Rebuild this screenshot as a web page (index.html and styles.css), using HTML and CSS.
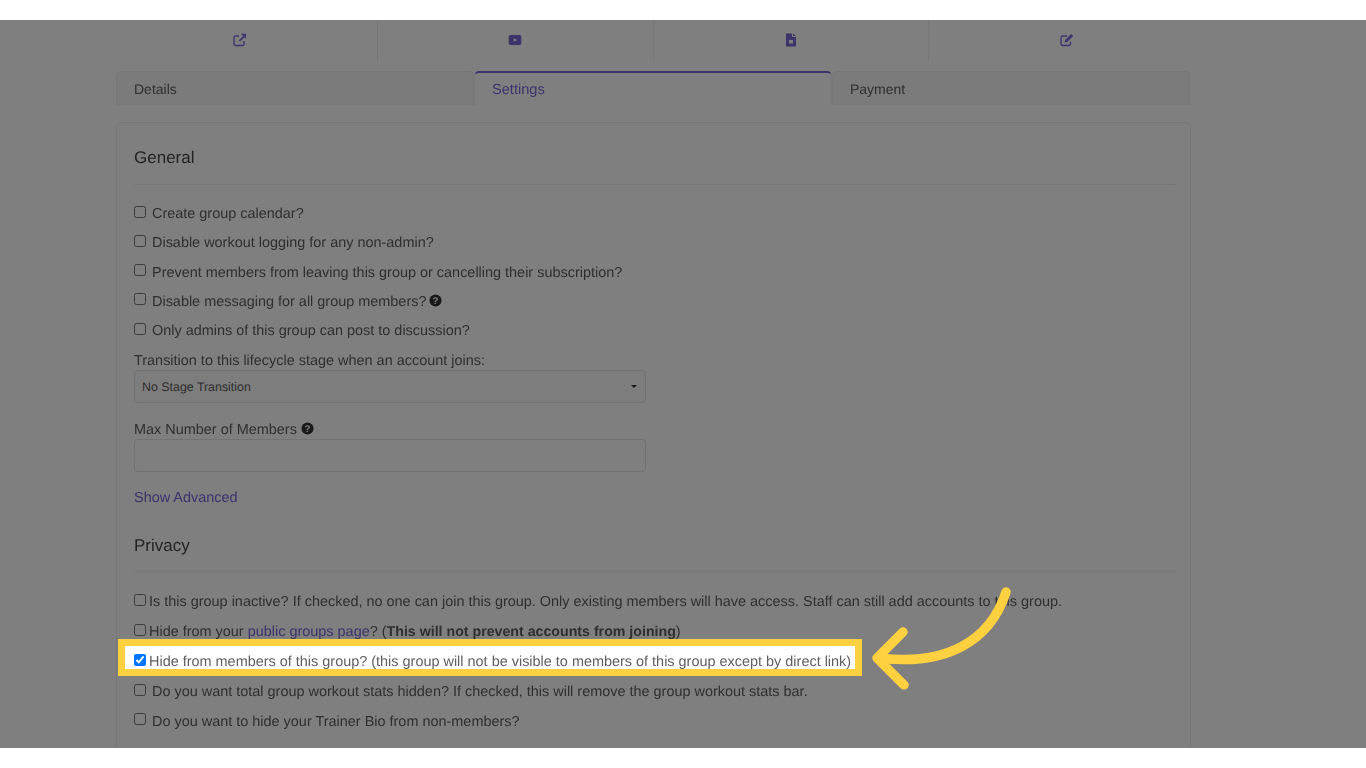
FILE: index.html
```html
<!DOCTYPE html>
<html>
	<head>
		<meta charset="UTF-8"/>
		<title>Group settings</title>
		<link rel="stylesheet" href="styles.css">
	</head>
	<body>
		<div class="frame">
			<div class="shot">
				<div class="page">
					<div class="toolbar">
						<div class="tool">
							<svg viewBox="-1 0 14 14" class="ico"><path d="M11 8v3a1.500 1.500 0 0 1-1.500 1.500h-7A1.500 1.500 0 0 1 1 11V4.500A1.500 1.500 0 0 1 2.500 3H6" fill="none" stroke="currentColor" stroke-width="1.300"/><path d="M8 .8h5.200V6l-1.800-1.800-4.300 4.400-1.300-1.300 4.300-4.400z" fill="currentColor"/></svg>
						</div>
						<div class="tool">
							<svg viewBox="0 0 14 14" class="ico"><path fill-rule="evenodd" d="M2.500 2h9a1.800 1.800 0 0 1 1.800 1.800v6.400a1.800 1.800 0 0 1-1.800 1.800h-9a1.800 1.800 0 0 1-1.800-1.800V3.800A1.800 1.800 0 0 1 2.500 2zM5.800 5.200v3.600L9 7z" fill="currentColor"/></svg>
						</div>
						<div class="tool">
							<svg viewBox="0 0 14 14" class="ico"><path fill-rule="evenodd" d="M2 .5h6v3.500h4v9.500H2zM9 .5l3 2.600H9zM5 7v3.500h4V7z" fill="currentColor"/></svg>
						</div>
						<div class="tool">
							<svg viewBox="0 0 14 14" class="ico"><path d="M10.500 8.500V11A1.500 1.500 0 0 1 9 12.500H2.500A1.500 1.500 0 0 1 1 11V4.500A1.500 1.500 0 0 1 2.500 3H7" fill="none" stroke="currentColor" stroke-width="1.300"/><path d="M11.200 1l1.900 1.900-6 6-2.500.6.600-2.500z" fill="currentColor"/></svg>
						</div>
					</div>

					<div class="tabs">
						<div class="tab">Details</div>
						<div class="tab active">Settings</div>
						<div class="tab">Payment</div>
					</div>

					<div class="card">
						<h3>General</h3>
						<div class="row"><input type="checkbox"><span class="text">Create group calendar?</span></div>
						<div class="row"><input type="checkbox"><span class="text">Disable workout logging for any non-admin?</span></div>
						<div class="row"><input type="checkbox"><span class="text">Prevent members from leaving this group or cancelling their subscription?</span></div>
						<div class="row"><input type="checkbox"><span class="text">Disable messaging for all group members?</span>
							<svg viewBox="0 0 14 14" class="help"><circle cx="7" cy="7" r="6.500" fill="currentColor"/><text x="7" y="10.600" text-anchor="middle" class="help-mark">?</text></svg>
						</div>
						<div class="row"><input type="checkbox"><span class="text">Only admins of this group can post to discussion?</span></div>

						<label class="field-label first">Transition to this lifecycle stage when an account joins:</label>
						<div class="select">No Stage Transition<span class="caret"></span></div>

						<label class="field-label">Max Number of Members <svg viewBox="0 0 14 14" class="help inline"><circle cx="7" cy="7" r="6.500" fill="currentColor"/><text x="7" y="10.600" text-anchor="middle" class="help-mark">?</text></svg></label>
						<div class="input"></div>

						<a class="link advanced">Show Advanced</a>

						<h3 class="privacy">Privacy</h3>
						<div class="row tight"><input type="checkbox"><span class="text">Is this group inactive? If checked, no one can join this group. Only existing members will have access. Staff can still add accounts to this group.</span></div>
						<div class="row tight"><input type="checkbox"><span class="text">Hide from your <a class="link">public groups page</a>? (<b>This will not prevent accounts from joining</b>)</span></div>
						<div class="row tight marked"><input type="checkbox" checked><span class="text">Hide from members of this group? (this group will not be visible to members of this group except by direct link)</span></div>
						<div class="row"><input type="checkbox"><span class="text">Do you want total group workout stats hidden? If checked, this will remove the group workout stats bar.</span></div>
						<div class="row"><input type="checkbox"><span class="text">Do you want to hide your Trainer Bio from non-members?</span></div>
					</div>
				</div>
				<div class="dim"></div>
			</div>
			<svg class="arrow" viewBox="0 0 1366 728">
				<path d="M1006 572C990 622 945 646 880 638M903 612L877 638L904 665"/>
			</svg>
		</div>
	</body>
</html>
```

FILE: styles.css
```css
body{
	margin: 0;
	background-color: white;
	font-family: "Liberation Sans", Arial, sans-serif;
	font-size: 14.450px;
	text-rendering: geometricPrecision;
	color: #5f5f5f;
}
b{
	font-size: 14.200px;
}
.frame{
	position: relative;
	margin-top: 20px;
	height: 728px;
	overflow: hidden;
	background-color: white;
}
.shot{
	position: relative;
	height: 728px;
	overflow: hidden;
	filter: blur(0.4px);
}
.page{
	width: 1075px;
	margin-left: 116px;
}
.dim{
	position: absolute;
	top: 0;
	left: 0;
	right: 0;
	bottom: 0;
	background-color: rgba(0,0,0,0.5);
	z-index: 1;
}
.arrow{
	position: absolute;
	top: 0;
	left: 0;
	width: 1366px;
	height: 728px;
}
.arrow path{
	fill: none;
	stroke: #ffd03f;
	stroke-width: 9.500;
	stroke-linecap: round;
	stroke-linejoin: round;
}

/* icon strip */
.toolbar{
	display: flex;
	height: 42px;
	margin-left: -14px;
	width: 1102px;
}
.tool{
	flex: 1;
	display: flex;
	align-items: flex-start;
	justify-content: center;
	padding-top: 13px;
	border-right: 1px solid #eee;
	color: #7a68d8;
}
.tool:last-child{
	border-right: none;
}
.ico{
	width: 14px;
	height: 14px;
}

/* tabs */
.tabs{
	display: flex;
	margin-top: 9px;
	height: 34px;
	width: 1074px;
}
.tab{
	flex: 1;
	padding: 9px 17px 0;
	box-sizing: border-box;
	line-height: 17px;
	font-size: 14px;
	background-color: #f6f6f6;
	border: 1px solid #eee;
	border-bottom: none;
	border-radius: 5px 5px 0 0;
}
.tab.active{
	background-color: white;
	border-top: 2px solid #7a68d8;
	color: #7a68d8;
	font-size: 14.600px;
	padding-top: 9px;
}

/* settings card */
.card{
	margin-top: 17px;
	padding: 0 15px 0 17px;
	height: 700px;
	box-sizing: border-box;
	border: 1px solid #eee;
	border-radius: 5px;
}
h3{
	margin: 24px 0 18px;
	padding-bottom: 16px;
	border-bottom: 1px solid #eee;
	font-size: 17px;
	line-height: 21px;
	font-weight: normal;
	color: #484848;
}
h3.privacy{
	margin-top: 27px;
	margin-bottom: 19px;
	padding-bottom: 15px;
}
.row{
	display: flex;
	align-items: center;
	height: 20px;
	margin-bottom: 9.300px;
	white-space: nowrap;
}
.row .text{
	padding-top: 2px;
}
.row input{
	margin: -3px 6px 0 0;
	width: 12px;
	height: 12px;
	flex: none;
}
.row.tight{
	margin-bottom: 10px;
}
.row.tight input{
	margin: -3px 3px 0 0;
}
.row.marked{
	position: relative;
	z-index: 2;
	box-sizing: border-box;
	width: fit-content;
	height: 23px;
	margin: -5.500px 0 12.500px -9px;
	padding: 8px 4px 0 9px;
	background-color: white;
	outline: 7.500px solid #ffd03f;
}
.help{
	width: 13px;
	height: 13px;
	margin-left: 3px;
	color: #333;
}
.help.inline{
	margin-left: 0;
	vertical-align: -1px;
}
.help-mark{
	font-size: 10.500px;
	font-weight: bold;
	fill: white;
}
.field-label{
	display: block;
	line-height: 20px;
	padding-top: 1px;
	margin-bottom: -1px;
}
.field-label.first{
	margin-top: 2px;
	padding-top: 2px;
	margin-bottom: -2px;
}
.select{
	position: relative;
	margin: 1px 0 16px;
	width: 512px;
	height: 33px;
	padding-left: 7px;
	box-sizing: border-box;
	line-height: 32px;
	font-size: 12.400px;
	background-color: #fafafa;
	border: 1px solid #e4e4e4;
	border-radius: 4px;
}
.caret{
	position: absolute;
	right: 8px;
	top: 14px;
	border-left: 3px solid transparent;
	border-right: 3px solid transparent;
	border-top: 3px solid #333;
}
.input{
	width: 512px;
	height: 33px;
	box-sizing: border-box;
	background-color: white;
	border: 1px solid #e4e4e4;
	border-radius: 4px;
}
.link{
	color: #7a68d8;
}
.advanced{
	display: block;
	margin-top: 16px;
	line-height: 20px;
}
```
